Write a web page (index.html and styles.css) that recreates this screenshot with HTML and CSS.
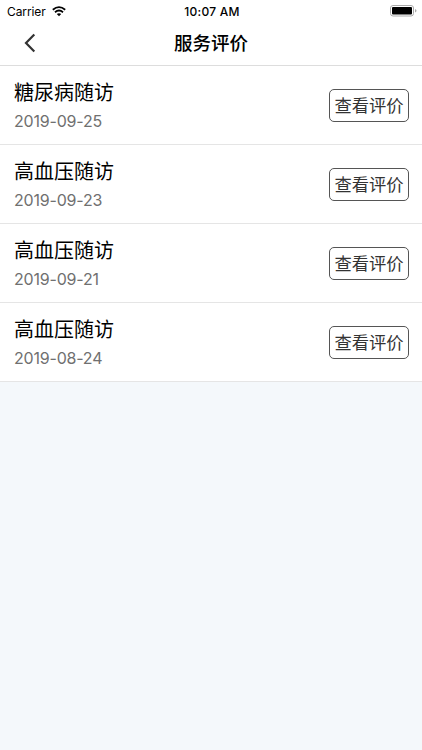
FILE: index.html
```html
<!DOCTYPE html>
<html lang="zh-CN">
<head>
    <meta charset="UTF-8">
    <title>服务评价</title>
    <link rel="stylesheet" href="styles.css">
</head>
<body>
    <header>
        <div class="status-bar">
            <div class="carrier">
                <span>Carrier</span>
                <svg class="wifi" width="14" height="11" viewBox="0 0 14 11">
                    <path d="M0.8 3.8Q7 -1.6 13.2 3.8M3 6.2Q7 2.8 11 6.2" fill="none" stroke="#000" stroke-width="1.8"/>
                    <path d="M4.8 8Q7 6.3 9.2 8L7 10.3Z"/>
                </svg>
            </div>
            <span class="time">10:07 AM</span>
            <svg class="battery" width="27" height="12" viewBox="0 0 27 12">
                <rect x="0.5" y="0.5" width="23" height="10.5" rx="2.5" fill="none" stroke="#aaa"/>
                <rect x="2" y="2" width="20" height="7.5" rx="1"/>
                <path d="M25 4Q26.5 4.5 26.5 5.8T25 7.6Z" fill="#aaa"/>
            </svg>
        </div>
        <div class="nav-bar">
            <svg class="back" width="12" height="20" viewBox="0 0 12 20">
                <path d="M10.3 1.5L2 10L10.3 18.5" fill="none" stroke="#333" stroke-width="2.2"/>
            </svg>
            <h1>服务评价</h1>
        </div>
    </header>

    <ul class="list">
        <li class="item">
            <div class="info">
                <h2>糖尿病随访</h2>
                <p>2019-09-25</p>
            </div>
            <button>查看评价</button>
        </li>
        <li class="item">
            <div class="info">
                <h2>高血压随访</h2>
                <p>2019-09-23</p>
            </div>
            <button>查看评价</button>
        </li>
        <li class="item">
            <div class="info">
                <h2>高血压随访</h2>
                <p>2019-09-21</p>
            </div>
            <button>查看评价</button>
        </li>
        <li class="item">
            <div class="info">
                <h2>高血压随访</h2>
                <p>2019-08-24</p>
            </div>
            <button>查看评价</button>
        </li>
    </ul>
</body>
</html>
```
FILE: styles.css
```css
* {
    box-sizing: border-box;
}

body {
    margin: 0;
    min-height: 100vh;
    font-family: Inter, "Noto Sans CJK SC", sans-serif;
    background-color: #f4f8fb;
}

header {
    height: 66px;
    background-color: #fff;
    border-bottom: 1px solid #ddd;
}

.status-bar {
    height: 22px;
    padding: 0 5px 0 7px;
    display: grid;
    grid-template-columns: 1fr auto 1fr;
    align-items: center;
    font-size: 12px;
}

.carrier {
    display: flex;
    align-items: center;
    gap: 6px;
    letter-spacing: -0.1px;
}

.time {
    font-weight: 500;
    letter-spacing: 0.25px;
}

.battery {
    justify-self: end;
}

.nav-bar {
    height: 42px;
    padding: 0 24px;
    display: grid;
    grid-template-columns: 12px 1fr 12px;
    align-items: center;
}

.nav-bar h1 {
    margin: 0;
    text-align: center;
    font-size: 18.5px;
    font-weight: 500;
    line-height: 26px;
}

.list {
    margin: 0;
    padding: 0;
    list-style: none;
}

.item {
    height: 79px;
    padding: 0 13px 0 14px;
    display: flex;
    justify-content: space-between;
    align-items: center;
    background-color: #fff;
    border-bottom: 1px solid #e5e5e5;
}

.info {
    padding-top: 3px;
}

.info h2 {
    margin: 0;
    font-size: 20px;
    font-weight: 400;
    line-height: 30px;
}

.info p {
    margin: 0;
    font-size: 16px;
    line-height: 27px;
    letter-spacing: -0.2px;
    color: #707070;
}

button {
    width: 80px;
    height: 33px;
    padding: 0 0 2px;
    font-family: inherit;
    font-size: 17.3px;
    color: #333;
    background-color: #fff;
    border: 1px solid #555;
    border-radius: 5px;
}
```
